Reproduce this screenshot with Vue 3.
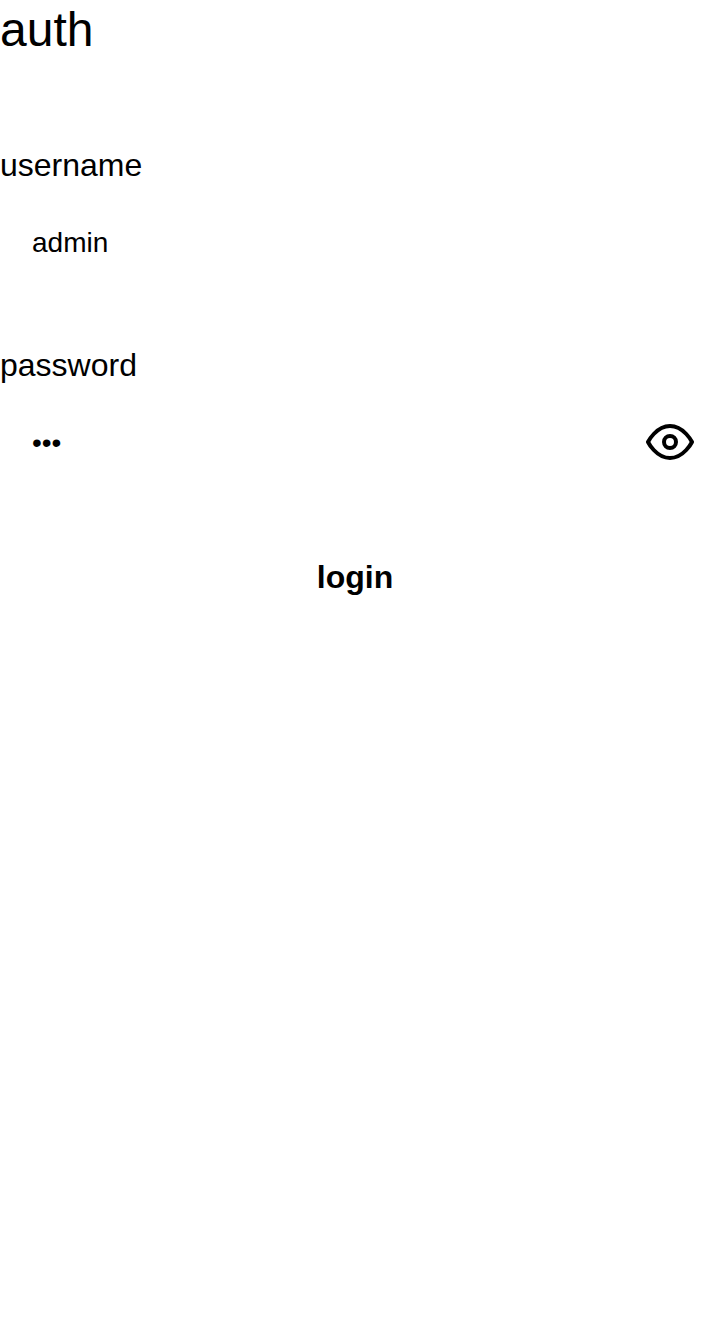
<script setup>
import { ref } from 'vue'

const username = ref('admin')
const password = ref('123')
const visible = ref(false)
</script>

<template>
  <main class="auth">
    <h1 class="title">auth</h1>
    <form class="form" @submit.prevent>
      <div class="field">
        <label class="label" for="username">username</label>
        <div class="control">
          <input id="username" v-model="username" class="input" type="text" />
        </div>
      </div>
      <div class="field">
        <label class="label" for="password">password</label>
        <div class="control">
          <input id="password" v-model="password" class="input" :type="visible ? 'text' : 'password'" />
          <button class="toggle" type="button" aria-label="Show password" @click="visible = !visible">
            <svg viewBox="0 0 24 24" width="48" height="48" fill="none" stroke="currentColor" stroke-width="2" stroke-linecap="round" stroke-linejoin="round">
              <path d="M1 12s4-8 11-8 11 8 11 8-4 8-11 8-11-8-11-8z" />
              <circle cx="12" cy="12" r="3" />
            </svg>
          </button>
        </div>
      </div>
      <button class="submit" type="submit">login</button>
    </form>
  </main>
</template>

<style>
body {
  margin: 0;
  background: #fff;
}
</style>

<style scoped>
.auth {
  min-height: 1334px;
  color: #000;
  font-family: "Liberation Sans", Arial, sans-serif;
}
.title {
  margin: 0;
  font-size: 48px;
  font-weight: 400;
  line-height: 60px;
}
.form {
  display: flex;
  flex-direction: column;
  padding-top: 85px;
}
.field {
  height: 200px;
}
.label {
  display: block;
  font-size: 32px;
  line-height: 40px;
}
.control {
  display: flex;
  align-items: center;
  height: 80px;
  margin-top: 17px;
  padding: 0 16px 0 32px;
}
.input {
  flex: 1;
  min-width: 0;
  padding: 2px 0 0;
  border: 0;
  outline: 0;
  background: transparent;
  color: inherit;
  font-family: inherit;
  font-size: 28px;
}
.toggle {
  display: flex;
  padding: 0;
  border: 0;
  background: transparent;
  color: inherit;
}
.submit {
  height: 64px;
  padding: 0;
  border: 0;
  background: transparent;
  color: inherit;
  font-family: inherit;
  font-size: 32px;
  font-weight: 700;
}
</style>
